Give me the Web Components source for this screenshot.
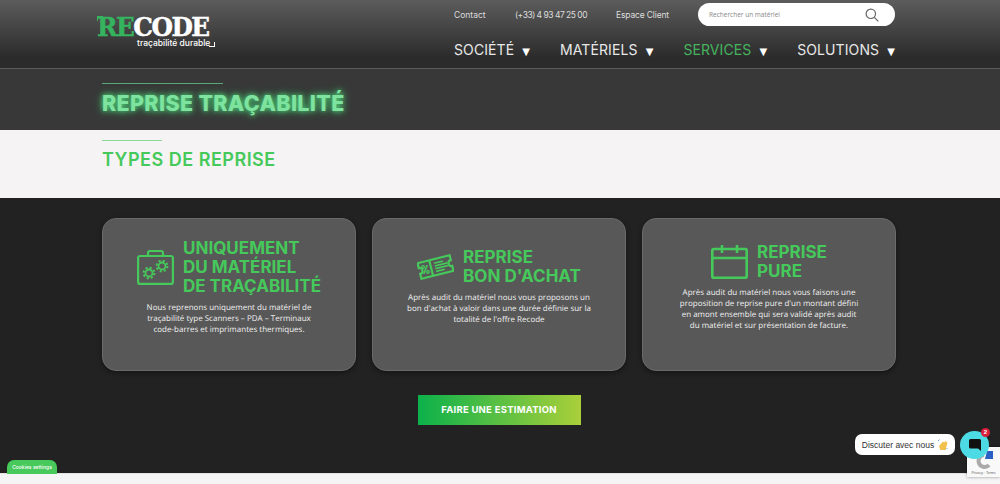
<!DOCTYPE html>
<html lang="fr">
<head>
<meta charset="utf-8">
<title>Reprise traçabilité</title>
<style>
  html, body { margin: 0; padding: 0; }
  body { width: 1000px; height: 484px; overflow: hidden; background: #f5f5f5; font-family: Inter, "Open Sans", sans-serif; }
</style>
</head>
<body>
<site-header></site-header>
<title-band>REPRISE TRAÇABILITÉ</title-band>
<section-head>TYPES DE REPRISE</section-head>
<dark-section>
  <info-card>
    <svg slot="icon" width="37" height="35" viewBox="0 0 37 35" fill="none" stroke="#46c95b" stroke-width="2.200">
      <rect x="1.100" y="6" width="34.800" height="27.900" rx="2"/>
      <path d="M11 6V3a2 2 0 0 1 2-2h11a2 2 0 0 1 2 2v3"/>
      <circle cx="12" cy="23" r="3.500" stroke-width="1.800"/>
      <circle cx="12" cy="23" r="5.400" stroke-width="2" stroke-dasharray="2.120 2.120"/>
      <circle cx="25" cy="16" r="3.500" stroke-width="1.800"/>
      <circle cx="25" cy="16" r="5.400" stroke-width="2" stroke-dasharray="2.120 2.120"/>
    </svg>
    <span slot="title">UNIQUEMENT<br>DU MATÉRIEL<br>DE TRAÇABILITÉ</span>
    Nous reprenons uniquement du matériel de<br>traçabilité type Scanners – PDA – Terminaux<br>code-barres et imprimantes thermiques.
  </info-card>
  <info-card>
    <svg slot="icon" width="37" height="26" viewBox="0 0 37 26" fill="none" stroke="#46c95b" stroke-width="2.200">
      <g transform="rotate(-14 18.500 13)">
        <path d="M2 5h33v5a3 3 0 0 0 0 6v5H2v-5a3 3 0 0 0 0-6z"/>
        <path d="M14 5v16"/>
        <path d="M5.500 17 11 9" stroke-width="1.600"/>
        <circle cx="6.500" cy="10" r="1.300" stroke-width="1.300"/>
        <circle cx="10" cy="16" r="1.300" stroke-width="1.300"/>
        <path d="M18 9h9M18 11.800h13M18 14.600h13M18 17.400h9" stroke-width="1.700"/>
      </g>
    </svg>
    <span slot="title">REPRISE<br>BON D'ACHAT</span>
    Après audit du matériel nous vous proposons un<br>bon d'achat à valoir dans une durée définie sur la<br>totalité de l'offre Recode
  </info-card>
  <info-card>
    <svg slot="icon" width="37" height="34" viewBox="0 0 37 34" fill="none" stroke="#46c95b" stroke-width="2.600">
      <rect x="1.300" y="4" width="34.400" height="28.700" rx="1.500"/>
      <path d="M1 13h35M11 0v8M26 0v8"/>
    </svg>
    <span slot="title">REPRISE<br>PURE</span>
    Après audit du matériel nous vous faisons une<br>proposition de reprise pure d'un montant défini<br>en amont ensemble qui sera validé après audit<br>du matériel et sur présentation de facture.
  </info-card>
</dark-section>
<cookie-badge>Cookies settings</cookie-badge>
<recaptcha-badge></recaptcha-badge>
<chat-widget>Discuter avec nous</chat-widget>

<script>
class SiteHeader extends HTMLElement {
  constructor() {
    super();
    this.attachShadow({ mode: "open" });
    this.shadowRoot.innerHTML = `
      <style>
        :host { display: flex; justify-content: space-between; box-sizing: border-box; height: 69px; padding: 0 105px 0 97px;
          background: linear-gradient(#5c5c5c, #2b2b2b 85%); border-bottom: 1px solid #5a5a5a; font-family: Inter, sans-serif; }
        .logo { position: relative; width: 116px; padding-top: 13px; color: #fff; }
        .word { font: 700 26.500px/28px "DejaVu Serif", serif; letter-spacing: -1.600px; white-space: nowrap; transform: scaleX(.93); transform-origin: left; -webkit-text-stroke: .5px #fff; }
        .word b { color: #35b35f; font-weight: 700; -webkit-text-stroke: .5px #35b35f; }
        .tag { font-size: 8.500px; font-weight: 500; line-height: 10px; margin: -3px 0 0 40px; white-space: nowrap; }
        .corner { position: absolute; left: 0; top: 16px; width: 5px; height: 4px; border: solid #35b35f; border-width: 1px 0 0 1px; }
        .corner.end { left: 112px; top: 42px; border-color: #fff; border-width: 0 1px 1px 0; }
        .right { width: 441px; display: flex; flex-direction: column; }
        .top { display: flex; align-items: center; height: 23px; margin-top: 3px; color: #ddd; font-size: 8.500px; }
        .top span:nth-child(1) { width: 61px; }
        .top span:nth-child(2) { width: 101px; letter-spacing: -.5px; }
        .top span:nth-child(3) { width: 82px; letter-spacing: -.15px; }
        .search { flex: 1; height: 23px; box-sizing: border-box; padding: 0 16px 0 11px; border-radius: 12px; background: #fff; display: flex; align-items: center; justify-content: space-between; color: #888; font: 6.500px "Open Sans", sans-serif; }
        nav { display: flex; justify-content: space-between; margin-top: 15px; font-size: 14px; letter-spacing: .1px; color: #e8e8e8; }
        nav span { white-space: nowrap; }
        nav i { font-style: normal; font-size: 10px; margin-left: 4px; color: #fff; font-family: "DejaVu Sans", sans-serif; }
        .on { color: #45b45d; }
        .on i { color: #fff; }
      </style>
      <div class="logo">
        <div class="corner"></div>
        <div class="word"><b>RE</b>CODE</div>
        <div class="tag">traçabilité durable</div>
        <div class="corner end"></div>
      </div>
      <div class="right">
        <div class="top">
          <span>Contact</span><span>(+33) 4 93 47 25 00</span><span>Espace Client</span>
          <div class="search">Rechercher un matériel
            <svg width="14" height="14" viewBox="0 0 14 14" fill="none" stroke="#666" stroke-width="1.200"><circle cx="5.800" cy="5.800" r="4.700"/><path d="m9.300 9.300 4 4"/></svg>
          </div>
        </div>
        <nav>
          <span>SOCIÉTÉ <i>▼</i></span>
          <span>MATÉRIELS <i>▼</i></span>
          <span class="on">SERVICES <i>▼</i></span>
          <span>SOLUTIONS <i>▼</i></span>
        </nav>
      </div>`;
  }
}

class TitleBand extends HTMLElement {
  constructor() {
    super();
    this.attachShadow({ mode: "open" });
    this.shadowRoot.innerHTML = `
      <style>
        :host { display: block; box-sizing: border-box; height: 61px; padding: 14px 0 0 102px; background: #383838; font-family: Inter, sans-serif; }
        .rule { width: 121px; height: 1px; background: #5aa878; }
        h1 { margin: 7px 0 0; font-size: 21.500px; line-height: 25px; font-weight: 800; letter-spacing: .33px; color: #7fe3a0; white-space: nowrap;
          text-shadow: 0 0 5px #4fd07a, 0 0 10px #3fbf6a; }
      </style>
      <div class="rule"></div>
      <h1><slot></slot></h1>`;
  }
}

class SectionHead extends HTMLElement {
  constructor() {
    super();
    this.attachShadow({ mode: "open" });
    this.shadowRoot.innerHTML = `
      <style>
        :host { display: block; box-sizing: border-box; height: 68px; padding: 10px 0 0 102px; background: #f5f3f3; font-family: Inter, sans-serif; }
        .rule { width: 60px; height: 1px; background: #86d998; }
        h2 { margin: 8px 0 0; font-size: 18px; line-height: 21px; font-weight: 600; letter-spacing: .5px; color: #46c95b; white-space: nowrap; }
      </style>
      <div class="rule"></div>
      <h2><slot></slot></h2>`;
  }
}

class DarkSection extends HTMLElement {
  constructor() {
    super();
    this.attachShadow({ mode: "open" });
    this.shadowRoot.innerHTML = `
      <style>
        :host { display: block; box-sizing: border-box; height: 276px; padding: 20px 104px 0 102px; background: #212221; border-bottom: 1px solid #e2e2e2; }
        .cards { display: grid; grid-template-columns: repeat(3, 1fr); gap: 16px; }
        .cta { display: block; width: 163px; height: 30px; margin: 24px auto 0; background: linear-gradient(90deg, #0cb14b, #aacf3a); color: #fff;
          font: 700 9.500px/30px Inter, sans-serif; letter-spacing: .25px; text-align: center; }
      </style>
      <div class="cards"><slot></slot></div>
      <a class="cta">FAIRE UNE ESTIMATION</a>`;
  }
}

class InfoCard extends HTMLElement {
  constructor() {
    super();
    this.attachShadow({ mode: "open" });
    this.shadowRoot.innerHTML = `
      <style>
        :host { display: flex; flex-direction: column; justify-content: center; box-sizing: border-box; height: 153px; padding-bottom: 16px;
          background: #585858; border: 1px solid #6a6a6a; border-radius: 14px; box-shadow: 0 2px 5px rgba(0,0,0,.4); }
        .head { display: flex; align-items: center; justify-content: center; gap: 9px; }
        .title { font: 700 17px/19px Inter, sans-serif; color: #46c95b; white-space: nowrap; }
        p { margin: 6px 0 0; font: 8px/11px "Open Sans", sans-serif; color: #f0f0f0; text-align: center; white-space: nowrap; text-rendering: geometricPrecision; }
      </style>
      <div class="head"><slot name="icon"></slot><div class="title"><slot name="title"></slot></div></div>
      <p><slot></slot></p>`;
  }
}

class CookieBadge extends HTMLElement {
  constructor() {
    super();
    this.attachShadow({ mode: "open" });
    this.shadowRoot.innerHTML = `
      <style>
        :host { position: absolute; left: 7px; top: 460px; width: 50px; height: 14px; border-radius: 7px 7px 0 0 / 7px; background: #47c95c; color: #fff;
          font: 500 5px/14px Inter, sans-serif; text-align: center; }
      </style>
      <slot></slot>`;
  }
}

class RecaptchaBadge extends HTMLElement {
  constructor() {
    super();
    this.attachShadow({ mode: "open" });
    this.shadowRoot.innerHTML = `
      <style>
        :host { position: absolute; left: 967px; top: 447px; width: 33px; height: 30px; background: #f9f9f9; box-shadow: 0 0 3px rgba(0,0,0,.4); text-align: center; font: 3.500px/5px "Liberation Sans", sans-serif; color: #666; }
        svg { display: block; margin: 3px auto 0; }
      </style>
      <svg width="24" height="21" viewBox="0 0 24 21" fill="none">
        <path d="M15 1h6v8h-8z" fill="#2a5fc4"/>
        <path d="M12 5a6 6 0 1 0 5 10" stroke="#aaa" stroke-width="4"/>
        <path d="M2 5h6v7z" fill="#aaa"/>
      </svg>
      Privacy · Terms`;
  }
}

class ChatWidget extends HTMLElement {
  constructor() {
    super();
    this.attachShadow({ mode: "open" });
    this.shadowRoot.innerHTML = `
      <style>
        :host { position: absolute; left: 855px; top: 431px; width: 134px; display: flex; align-items: flex-start; justify-content: space-between; }
        .pill { width: 100px; height: 21px; box-sizing: border-box; margin-top: 3px; border-radius: 7px; background: #fff; color: #333; display: flex; align-items: center; justify-content: center; gap: 3px;
          font: 8.500px "Liberation Sans", sans-serif; white-space: nowrap; }
        .btn { position: relative; width: 29px; height: 28px; border-radius: 50%; background: #4cdbe4; display: flex; align-items: center; justify-content: center; }
        .badge { position: absolute; right: -1px; top: -3px; width: 9px; height: 9px; border-radius: 50%; background: #d81f3c; color: #fff; font: 700 6px/9px "Liberation Sans", sans-serif; text-align: center; }
      </style>
      <div class="pill"><slot></slot>
        <svg width="11" height="11" viewBox="0 0 11 11"><path d="M2 7 6 2.500l1 1L9 2l1.500 2L9 9a3 3 0 0 1-6 1z" fill="#f2c04d"/><path d="M1 2 2.500.5M9.500 10l1-1" stroke="#6aa7d8"/></svg>
      </div>
      <div class="btn">
        <svg width="12" height="12" viewBox="0 0 12 12"><path d="M1.500 0h9A1.500 1.500 0 0 1 12 1.500V12l-3-2.500H1.500A1.500 1.500 0 0 1 0 8V1.500A1.500 1.500 0 0 1 1.500 0z" fill="#111"/></svg>
        <div class="badge">2</div>
      </div>`;
  }
}

customElements.define("site-header", SiteHeader);
customElements.define("title-band", TitleBand);
customElements.define("section-head", SectionHead);
customElements.define("dark-section", DarkSection);
customElements.define("info-card", InfoCard);
customElements.define("cookie-badge", CookieBadge);
customElements.define("recaptcha-badge", RecaptchaBadge);
customElements.define("chat-widget", ChatWidget);
</script>
</body>
</html>
